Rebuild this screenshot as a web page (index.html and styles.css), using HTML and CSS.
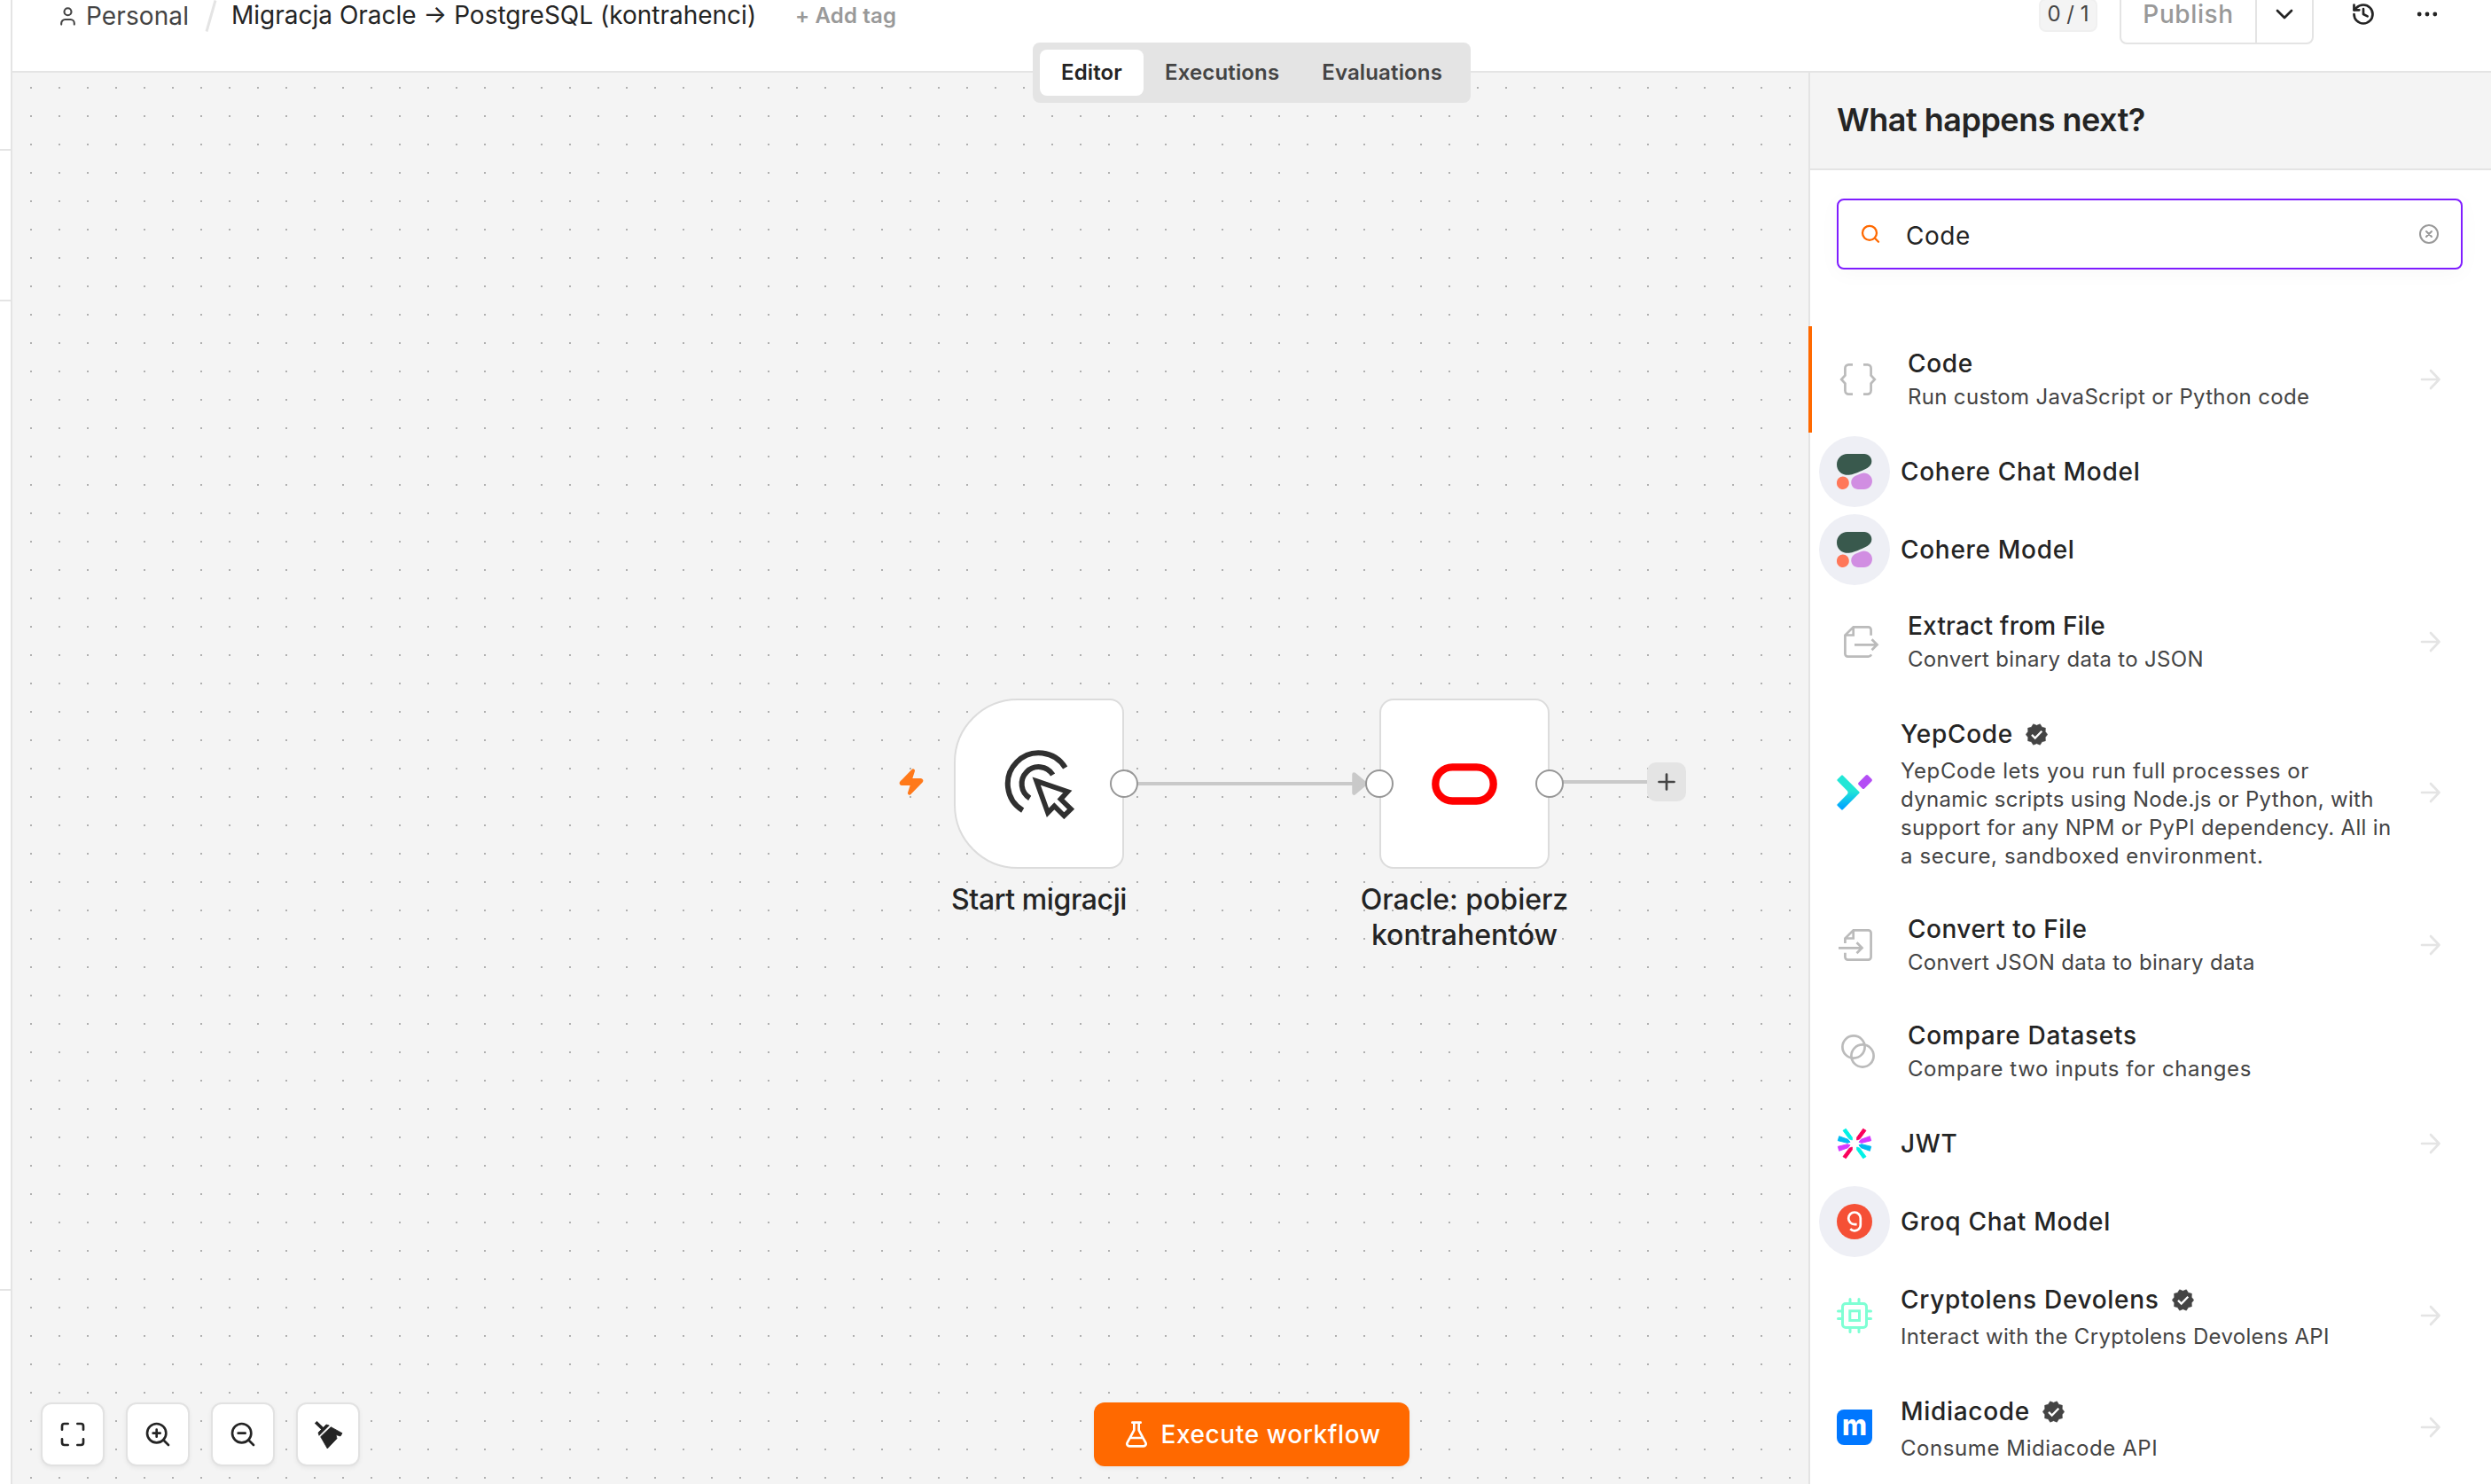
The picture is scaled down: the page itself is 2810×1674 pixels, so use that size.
FILE: index.html
```html
<!DOCTYPE html>
<html lang="pl">
<head>
<meta charset="utf-8">
<title>Migracja Oracle → PostgreSQL (kontrahenci)</title>
<link rel="stylesheet" href="styles.css">
</head>
<body>
<svg class="defs" width="0" height="0">
  <defs>
    <linearGradient id="yep" x1="0" y1="0" x2="0" y2="1"><stop offset="0.45" stop-color="#22e6d6"/><stop offset="0.95" stop-color="#00a6ff"/></linearGradient>
    <symbol id="arrow" viewBox="0 0 24 24"><path d="M2 12h19.5M12 2l9.5 10L12 22" fill="none" stroke="#e4e4e4" stroke-width="2.7" stroke-linecap="round" stroke-linejoin="round"/></symbol>
    <symbol id="verified" viewBox="0 0 25 25">
      <path fill="#444" stroke="#444" stroke-width=".6" stroke-linejoin="round" d="M24.7 12.5 22.2 15.65 22.4 19.7 18.5 20.75 16.3 24.2 12.5 22.7 8.7 24.2 6.5 20.75 2.6 19.7 2.8 15.65.3 12.5 2.8 9.35 2.6 5.3 6.5 4.25 8.7.8 12.5 2.3 16.3.8 18.5 4.25 22.4 5.3 22.2 9.35z"/>
      <path d="M7 12.9l3.7 3.7 7.6-7.8" fill="none" stroke="#fff" stroke-width="2.3"/>
    </symbol>
    <symbol id="cohere" viewBox="0 0 75 75">
      <path fill="#39594d" d="M24.3 44.7c2 0 6-.1 11.6-2.4 6.5-2.7 19.3-7.5 28.6-12.5 6.5-3.5 9.3-8.1 9.3-14.3C73.8 7 66.9 0 58.3 0h-36C10 0 0 10 0 22.3s9.4 22.4 24.3 22.4z"/>
      <path fill="#d18ee2" d="M30.4 60c0-6 3.6-11.5 9.2-13.8l11.3-4.7C62.4 36.8 75 45.2 75 57.6 75 67.2 67.2 75 57.6 75H45.3c-8.2 0-14.9-6.7-14.9-15z"/>
      <path fill="#ff7759" d="M12.9 47.6C5.8 47.6 0 53.4 0 60.5v1.7C0 69.2 5.8 75 12.9 75s12.9-5.8 12.9-12.9v-1.7c-.1-7-5.8-12.8-12.9-12.8z"/>
    </symbol>
  </defs>
</svg>

<aside class="sidebar"><div class="side-a"></div><div class="side-b"></div><div class="side-c"></div></aside>

<main class="main">
  <header class="header">
    <div class="bar">
      <div class="crumbs">
        <svg class="person" width="17" height="21" viewBox="0 0 17 21" fill="none" stroke="#444" stroke-width="2.1" stroke-linecap="round"><circle cx="8.5" cy="5.2" r="4"/><path d="M1.2 19.6v-1.4a4.2 4.2 0 0 1 4.2-4.2h6.2a4.2 4.2 0 0 1 4.2 4.2v1.4"/></svg>
        <span class="t personal">Personal</span>
        <svg class="slash" width="14" height="38" viewBox="0 0 14 38"><path d="M12 1.5 2 36.5" stroke="#e4e4e4" stroke-width="3"/></svg>
        <span class="t wf-name">Migracja Oracle → PostgreSQL (kontrahenci)</span>
        <span class="t add-tag">+ Add tag</span>
      </div>
      <div class="actions">
        <span class="count"><span class="t">0 / 1</span></span>
        <div class="publish">
          <span class="pub-label"><span class="t">Publish</span></span>
          <span class="pub-more"><svg width="20" height="12" viewBox="0 0 20 12"><path d="M2 2l8 8 8-8" fill="none" stroke="#242424" stroke-width="2.7" stroke-linecap="round" stroke-linejoin="round"/></svg></span>
        </div>
        <svg class="history" width="28" height="28" viewBox="0 0 24 24" fill="none" stroke="#242424" stroke-width="2.3" stroke-linecap="round" stroke-linejoin="round"><path d="M3 12a9 9 0 1 0 9-9 9.75 9.75 0 0 0-6.74 2.74L3 8"/><path d="M3 3v5h5M12 7v5l4 2"/></svg>
        <svg class="dots" width="24" height="6" viewBox="0 0 24 6" fill="#242424"><circle cx="3.2" cy="3" r="2.4"/><circle cx="12" cy="3" r="2.4"/><circle cx="20.8" cy="3" r="2.4"/></svg>
      </div>
    </div>
  </header>

  <nav class="tabs">
    <span class="tab active"><span class="t">Editor</span></span>
    <span class="tab"><span class="t">Executions</span></span>
    <span class="tab"><span class="t">Evaluations</span></span>
  </nav>

  <div class="workspace">
    <section class="canvas">
      <svg class="edges" width="900" height="120" viewBox="1000 824 900 120">
        <path d="M1268 884H1530" stroke="#c9c9c9" stroke-width="4"/>
        <path d="M1527.5 873.5 1540 884 1527.5 894.5z" fill="#c9c9c9" stroke="#c9c9c9" stroke-width="4.5" stroke-linejoin="round"/>
        <path d="M1748 882H1860" stroke="#c9c9c9" stroke-width="4"/>
        <g transform="translate(1012 866) scale(1.3333)" fill="#ff791a" stroke="#ff791a" stroke-width="2" stroke-linejoin="round"><path d="M4 14a1 1 0 0 1-.78-1.63l9.9-10.2a.5.5 0 0 1 .86.46l-1.92 6.02A1 1 0 0 0 13 10h7a1 1 0 0 1 .78 1.63l-9.9 10.2a.5.5 0 0 1-.86-.46l1.92-6.02A1 1 0 0 0 11 14z"/></g>
      </svg>

      <div class="node trigger">
        <svg width="80" height="80" viewBox="426 252 240 240" fill="none" stroke="#303030" stroke-width="18">
          <path d="M635 318A105 105 0 1 0 491 462.5"/>
          <path d="M593 342A57 57 0 1 0 515 421"/>
          <path stroke-width="17" stroke-miterlimit="10" d="M537.5 363 643 399 619.5 424.5 654 458 631 480.5 598 447.5 576 470z"/>
        </svg>
        <i class="port out"></i>
        <div class="label start"><span class="t">Start migracji</span></div>
      </div>

      <div class="node oracle">
        <svg width="74" height="47" viewBox="0 0 74 47"><rect x="4.3" y="4.3" width="65.4" height="38.2" rx="19.1" fill="none" stroke="#f00" stroke-width="8.3"/></svg>
        <i class="port in"></i><i class="port out"></i>
        <div class="label"><span class="t">Oracle: pobierz</span><br><span class="t">kontrahentów</span></div>
      </div>

      <div class="plus"><svg width="20" height="20" viewBox="0 0 20 20"><path d="M10 1.5v17M1.5 10h17" stroke="#444" stroke-width="2.7" stroke-linecap="round"/></svg></div>

      <div class="controls">
        <button><svg width="32" height="32" viewBox="0 0 24 24"><path d="M8 3H5a2 2 0 0 0-2 2v3M21 8V5a2 2 0 0 0-2-2h-3M3 16v3a2 2 0 0 0 2 2h3M16 21h3a2 2 0 0 0 2-2v-3"/></svg></button>
        <button><svg width="32" height="32" viewBox="0 0 24 24"><circle cx="11" cy="11" r="8"/><path d="M21 21l-4.350-4.350M11 8v6M8 11h6"/></svg></button>
        <button><svg width="32" height="32" viewBox="0 0 24 24"><circle cx="11" cy="11" r="8"/><path d="M21 21l-4.350-4.350M8 11h6"/></svg></button>
        <button><svg class="broom" width="33" height="33" viewBox="0 0 33 33"><path d="M2.2 2.2 11 10.7" stroke="#242424" stroke-width="3.6"/><path d="M14 5l3.3 1L6 17.300 5 14zM19.300 7.700 32 14.700 30 18 25 16.500 26 20.700 15.300 32 7.700 18.700z" fill="#242424" stroke="#242424" stroke-width=".8"/></svg></button>
      </div>
    </section>

    <aside class="panel">
      <div class="panel-head"><h1><span class="t">What happens next?</span></h1></div>
      <div class="search">
        <svg width="24" height="24" viewBox="0 0 24 24" fill="none" stroke="#ff6900" stroke-width="2.3" stroke-linecap="round"><circle cx="11" cy="10.8" r="8"/><path d="M21 20.800l-4.300-4.300"/></svg>
        <span class="t query">Code</span>
        <svg class="clear" width="24" height="24" viewBox="0 0 24 24" fill="none" stroke="#999" stroke-width="2" stroke-linecap="round"><circle cx="12" cy="12" r="10"/><path d="M15 9l-6 6M9 9l6 6"/></svg>
      </div>
      <div class="list">
        <div class="row core selected">
          <svg class="icon" viewBox="0 0 48 48"><path d="M18 7.400h-4.600a4 4 0 0 0-4 4v8L5.200 24l4.200 4.600v8a4 4 0 0 0 4 4H18M30 7.400h4.600a4 4 0 0 1 4 4v8l4.200 4.600-4.200 4.600v8a4 4 0 0 1-4 4H30"/></svg>
          <div class="text"><div class="title"><span class="t">Code</span></div><div class="desc"><span class="t">Run custom JavaScript or Python code</span></div></div>
          <svg class="go"><use href="#arrow"/></svg>
        </div>
        <div class="row single">
          <span class="bubble"><svg class="icon"><use href="#cohere"/></svg></span>
          <div class="text"><div class="title"><span class="t">Cohere Chat Model</span></div></div>
        </div>
        <div class="row single">
          <span class="bubble"><svg class="icon"><use href="#cohere"/></svg></span>
          <div class="text"><div class="title"><span class="t">Cohere Model</span></div></div>
        </div>
        <div class="row core">
          <svg class="icon" viewBox="0 0 48 48"><path d="M38.600 16.700v-6.300a3 3 0 0 0-3-3H18.700L9.400 16.500v21.100a3 3 0 0 0 3 3h23.200c1.600 0 2.600-.8 3.400-2.300M9.400 16.500h9.300V7.400M20 27.300h25M39.500 21.300l6 6-6 6"/></svg>
          <div class="text"><div class="title tight"><span class="t">Extract from File</span></div><div class="desc"><span class="t">Convert binary data to JSON</span></div></div>
          <svg class="go"><use href="#arrow"/></svg>
        </div>
        <div class="row community tall">
          <svg class="icon" viewBox="0 0 40 40"><path d="M6 1.500 24.500 20 6 38.500 1.500 34l11.300-11.300q2.200-2.700 0-5.400L1.500 6z" fill="url(#yep)" stroke="url(#yep)" stroke-width="2.4" stroke-linejoin="round"/><path d="M34 1.800 38.200 6 30 14.200 25.800 10z" fill="#b44ef5" stroke="#b44ef5" stroke-width="3.4" stroke-linejoin="round"/></svg>
          <div class="text"><div class="title"><span class="t">YepCode</span><svg class="badge"><use href="#verified"/></svg></div>
          <div class="desc"><span class="t loose">YepCode lets you run full processes or</span><br><span class="t">dynamic scripts using Node.js or Python, with</span><br><span class="t">support for any NPM or PyPI dependency. All in</span><br><span class="t loose">a secure, sandboxed environment.</span></div></div>
          <svg class="go"><use href="#arrow"/></svg>
        </div>
        <div class="row core">
          <svg class="icon" viewBox="0 0 48 48"><path d="M9.400 22v-5.500l9.300-9.100h16.900a3 3 0 0 1 3 3v27.200a3 3 0 0 1-3 3H12.400a3 3 0 0 1-3-3v-4.900M9.400 16.500h9.300V7.400M2 27.300h26M22.500 21.300l6 6-6 6"/></svg>
          <div class="text"><div class="title medium"><span class="t">Convert to File</span></div><div class="desc"><span class="t">Convert JSON data to binary data</span></div></div>
          <svg class="go"><use href="#arrow"/></svg>
        </div>
        <div class="row core">
          <svg class="icon" viewBox="0 0 48 48"><circle cx="19" cy="19" r="12.6"/><circle cx="29" cy="29" r="12.6"/></svg>
          <div class="text"><div class="title"><span class="t">Compare Datasets</span></div><div class="desc"><span class="t loose">Compare two inputs for changes</span></div></div>
        </div>
        <div class="row single">
          <svg class="icon jwt" viewBox="0 0 40 40">
            <path fill="#fb015b" stroke="#fb015b" d="M29.700 3.300 33 5.300 26 14.700 22.700 16v-3zM10.300 36.700 7 34.700 14 25.300 17.300 24v3z"/>
            <path fill="#00f2e6" stroke="#00f2e6" d="M10.300 3.300 7 5.300 14 14.700 17.300 16v-3zM29.700 36.700 33 34.700 26 25.300 22.700 24v3z"/>
            <path fill="#d63aff" stroke="#d63aff" d="M37.300 11.700l1.400 5L28 19.300l-3-1 2.300-3zM2.700 28.300l-1.400-5L12 20.700l3 1-2.300 3z"/>
            <path fill="#00b9f1" stroke="#00b9f1" d="M2.700 11.700l-1.400 5L12 19.300l3-1-2.300-3zM37.300 28.300l1.400-5L28 20.700l-3 1 2.300 3z"/>
          </svg>
          <div class="text"><div class="title"><span class="t">JWT</span></div></div>
          <svg class="go"><use href="#arrow"/></svg>
        </div>
        <div class="row single">
          <span class="bubble"><svg class="icon" viewBox="0 0 40 40"><circle cx="20" cy="20" r="20" fill="#f55036"/><path d="M22.600 23.100H20a6.800 6.800 0 1 1 6.800-6.800v7.200a6.800 6.800 0 0 1-11.600 4.800" fill="none" stroke="#fff" stroke-width="2.7"/></svg></span>
          <div class="text"><div class="title"><span class="t">Groq Chat Model</span></div></div>
        </div>
        <div class="row community">
          <svg class="icon" viewBox="0 0 40 40" fill="none" stroke="#7fffd4" stroke-width="3"><rect x="6.5" y="6.5" width="27" height="27" rx="3.5"/><rect x="14.8" y="14.8" width="10.7" height="10.7"/><path stroke-linecap="round" d="M15 1.500V6M25 1.500V6M15 34v4.500M25 34v4.500M1.500 15H6M1.500 23.500H6M34 15h4.500M34 23.500h4.500"/></svg>
          <div class="text"><div class="title"><span class="t">Cryptolens Devolens</span><svg class="badge"><use href="#verified"/></svg></div><div class="desc"><span class="t">Interact with the Cryptolens Devolens API</span></div></div>
          <svg class="go"><use href="#arrow"/></svg>
        </div>
        <div class="row community">
          <svg class="icon" viewBox="0 0 40 40"><path d="M8 0h32v32a8 8 0 0 1-8 8H8a8 8 0 0 1-8-8V8a8 8 0 0 1 8-8z" fill="#0077ff"/><text x="6" y="29.3" class="midia" textLength="28" lengthAdjust="spacingAndGlyphs">m</text></svg>
          <div class="text"><div class="title"><span class="t">Midiacode</span><svg class="badge"><use href="#verified"/></svg></div><div class="desc"><span class="t loose">Consume Midiacode API</span></div></div>
          <svg class="go"><use href="#arrow"/></svg>
        </div>
      </div>
    </aside>
  </div>

  <button class="execute">
    <svg width="32" height="32" viewBox="0 0 24 24" fill="none" stroke="#fff" stroke-width="2" stroke-linecap="round" stroke-linejoin="round"><path d="M14 2v6a2 2 0 0 0 .245.96l5.510 10.080A2 2 0 0 1 18 22H6a2 2 0 0 1-1.755-2.960l5.510-10.080A2 2 0 0 0 10 8V2M6.453 15h11.094M8.500 2h7"/></svg>
    <span class="t">Execute workflow</span>
  </button>
</main>
</body>
</html>
```
FILE: styles.css
```css
* { box-sizing: border-box; }
body { margin: 0; width: 2810px; height: 1674px; overflow: hidden; display: flex; background: #fff; color: #242424; font-family: Inter, "Liberation Sans", sans-serif; font-size: 28px; }
.defs { position: absolute; }
button { font: inherit; border: 0; padding: 0; }
svg { display: block; flex: none; }
.t { white-space: nowrap; }

.sidebar { width: 14px; flex: none; display: flex; flex-direction: column; border-right: 2px solid #e4e4e4; }
.sidebar div { border-bottom: 2px solid #e4e4e4; }
.side-a { height: 170px; }
.side-b { height: 170px; }
.side-c { height: 1116px; }

.main { position: relative; flex: 1; min-width: 0; display: flex; flex-direction: column; }
.header { height: 82px; flex: none; overflow: hidden; border-bottom: 2px solid #e4e4e4; }
.bar { height: 130px; margin-top: -48px; padding: 0 60px 0 54px; display: flex; align-items: center; justify-content: space-between; }
.crumbs, .actions { display: flex; align-items: center; }
.crumbs .person { margin-top: 2px; }
.personal { color: #444; margin: 2px 0 0 12px; letter-spacing: .1px; }
.slash { margin: 2px 16px 0 18px; }
.add-tag { font-size: 24px; font-weight: 600; color: #999; margin-left: 44px; letter-spacing: .15px; }
.actions { margin-top: -2px; }
.count { height: 38px; width: 66px; display: flex; align-items: center; justify-content: center; background: #f4f4f4; border: 2px solid #f0f0f0; border-radius: 8px; font-size: 24px; color: #444; margin: 2px 25px 0 0; padding-bottom: 3px; }
.publish { display: flex; width: 219px; height: 68px; border: 2px solid #e4e4e4; border-radius: 8px; margin-right: 42px; }
.pub-label { width: 153px; border-right: 2px solid #e4e4e4; display: flex; align-items: center; justify-content: center; color: #999; font-weight: 500; letter-spacing: .6px; }
.pub-more { flex: 1; display: flex; align-items: center; justify-content: center; }
.history { margin-right: 46px; }

.tabs { position: absolute; z-index: 2; top: 48px; left: 50%; transform: translateX(-50%); display: flex; padding: 8px; background: #e4e4e4; border-radius: 8px; }
.tab { height: 52px; padding: 0 24px 1px; display: flex; align-items: center; border-radius: 8px; font-size: 24px; font-weight: 600; letter-spacing: .14px; color: #444; }
.tab.active { background: #fff; color: #242424; }

.workspace { flex: 1; display: flex; min-height: 0; }
.canvas { position: relative; flex: 1; overflow: hidden; background: conic-gradient(from 270deg at 2px 2px, #b0b0b0 90deg, transparent 0) 20px 16px / 32px 32px, #f4f4f4; }
.edges { position: absolute; left: 986px; top: 742px; }
.node { position: absolute; top: 706px; width: 192px; height: 192px; background: #fff; border: 2px solid #dcdcdc; border-radius: 16px; display: flex; align-items: center; justify-content: center; }
.trigger { left: 1062px; border-radius: 72px 16px 16px 72px; }
.oracle { left: 1542px; }
.port { position: absolute; top: 78px; width: 32px; height: 32px; border-radius: 50%; background: #fff; border: 2px solid #979797; }
.port.in { left: -18px; }
.port.out { right: -18px; }
.label { position: absolute; top: 205px; left: -60px; right: -60px; text-align: center; font-size: 32px; line-height: 40px; font-weight: 500; }
.label.start { letter-spacing: -.4px; }
.plus { position: absolute; left: 1844px; top: 778px; width: 44px; height: 44px; border-radius: 10px; background: #e4e4e4; display: flex; align-items: center; justify-content: center; }
.controls { position: absolute; left: 32px; bottom: 20px; display: flex; gap: 24px; }
.controls button { width: 72px; height: 72px; border: 2px solid #e2e2e2; border-radius: 12px; background: #fff; box-shadow: 0 2px 5px rgba(0, 0, 0, .06); display: flex; align-items: center; justify-content: center; }
.controls svg:not(.broom) { fill: none; stroke: #242424; stroke-width: 2; stroke-linecap: round; stroke-linejoin: round; }
.execute { position: absolute; z-index: 2; bottom: 20px; left: 50%; transform: translateX(-50%); width: 356px; height: 72px; border-radius: 12px; background: #ff6900; color: #fff; font-weight: 500; letter-spacing: .6px; display: flex; align-items: center; justify-content: center; gap: 11px; box-shadow: 0 2px 5px rgba(0, 0, 0, .06); }

.panel { width: 770px; flex: none; border-left: 2px solid #e4e4e4; background: #fff; }
.panel-head { height: 110px; background: #f4f4f4; border-bottom: 2px solid #e4e4e4; padding: 0 30px 2px; display: flex; align-items: center; }
h1 { margin: 0; font-size: 36px; line-height: 44px; font-weight: 600; letter-spacing: -.5px; }
.search { margin: 32px 32px 64px 30px; height: 80px; border: 2px solid #7f1dff; border-radius: 8px; padding: 0 24px; display: flex; align-items: center; box-shadow: 0 4px 24px rgba(0, 0, 0, .03); }
.query { margin-left: 28px; flex: 1; padding-top: 3px; letter-spacing: .5px; }
.row { position: relative; display: flex; align-items: center; padding: 0 56px 0 30px; }
.row.core { height: 120px; }
.row.single { height: 88px; }
.row.community { height: 126px; padding-bottom: 2px; }
.row.tall { height: 222px; }
.row.selected::before { content: ""; position: absolute; left: -2px; top: 0; bottom: 0; width: 4px; background: #ff6900; }
.icon { width: 40px; height: 40px; margin-right: 32px; overflow: visible; }
.core .icon { width: 48px; height: 48px; fill: none; stroke: #bbb; stroke-width: 2.7; }
.jwt { stroke-width: .9; }
.bubble { display: flex; align-items: center; justify-content: center; width: 80px; height: 80px; flex: none; margin: 0 12px 0 -20px; border-radius: 50%; background: #eeeff5; }
.bubble .icon { margin: 0; }
.text { flex: 1; align-self: flex-start; padding-top: 24px; }
.single .text { padding-top: 26px; }
.community .text { padding-top: 26px; }
.title { display: flex; align-items: center; line-height: 36px; font-weight: 500; letter-spacing: .7px; }
.title.tight { letter-spacing: .2px; }
.title.medium { letter-spacing: .5px; }
.desc { font-size: 24px; line-height: 32px; margin-top: 4px; color: #444; letter-spacing: .32px; }
.desc .loose { letter-spacing: .58px; }
.community .desc { margin-top: 8px; }
.badge { width: 25px; height: 25px; margin-left: 14px; }
.go { width: 24px; height: 24px; }
.midia { font-size: 33px; font-weight: 800; fill: #fff; }
```
